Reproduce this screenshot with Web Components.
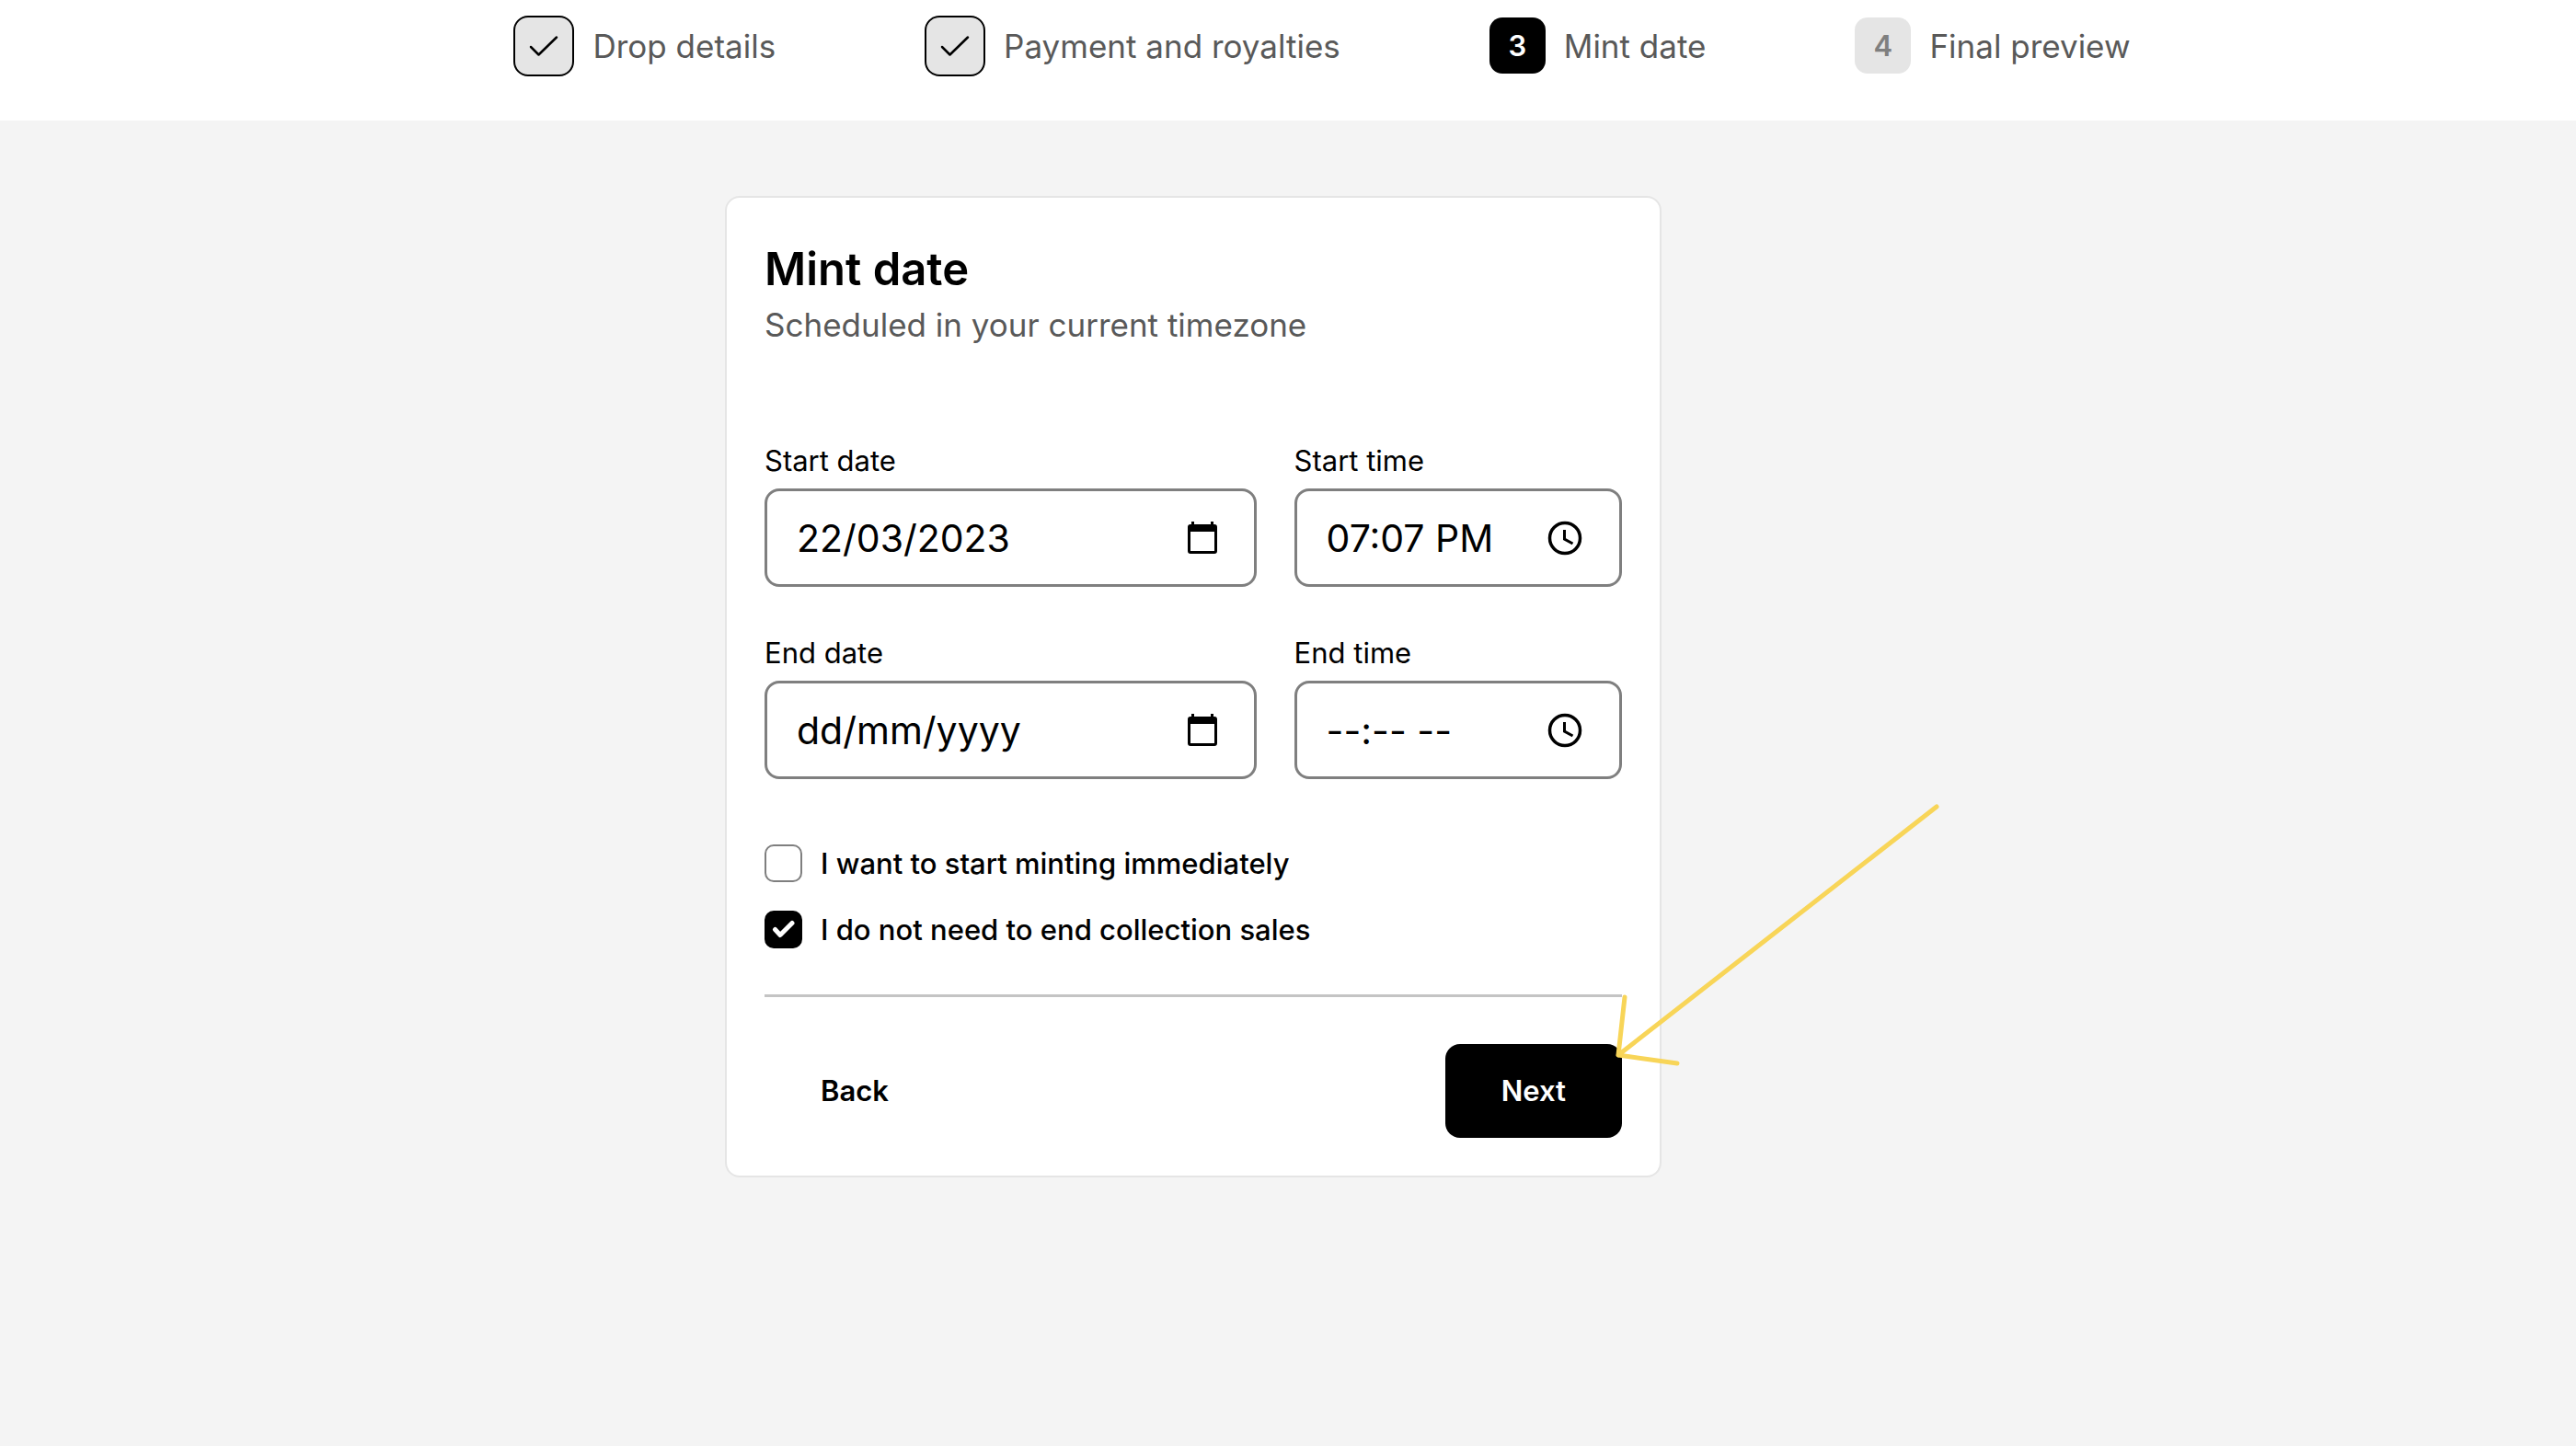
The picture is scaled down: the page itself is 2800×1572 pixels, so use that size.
<!DOCTYPE html>
<html lang="en">
<head>
<meta charset="utf-8">
<title>Mint date</title>
<style>
  body { margin: 0; min-height: 100vh; background: #f4f4f4; color: #000; font-family: Inter, "Liberation Sans", sans-serif; }
</style>
</head>
<body>
<mint-page></mint-page>
<script>
const define = (name, html, setup) => {
  const template = document.createElement('template');
  template.innerHTML = html;
  customElements.define(name, class extends HTMLElement {
    connectedCallback() {
      if (this.shadowRoot) return;
      const root = this.attachShadow({ mode: 'open' });
      root.append(template.content.cloneNode(true));
      if (setup) setup(this, root);
    }
  });
};

define('step-item', `
<style>
  :host { display: flex; align-items: center; gap: 20px; color: #595959; font-size: 35px; line-height: 44px; white-space: nowrap; }
  .badge { box-sizing: border-box; display: flex; align-items: center; justify-content: center; width: 61px; height: 61px; border-radius: 14px; background: #e5e5e5; color: #7f7f7f; font-size: 31px; font-weight: 600; }
  svg { display: none; width: 34px; height: 26px; }
  :host([state="done"]) .badge { width: 66px; height: 66px; border: 2px solid #000; border-radius: 16px; }
  :host([state="done"]) svg { display: block; }
  :host([state="current"]) .badge { background: #000; color: #fff; }
</style>
<span class="badge"><svg viewBox="0 0 34 26" fill="none" stroke="#000" stroke-width="2.500" stroke-linecap="round" stroke-linejoin="round" aria-hidden="true"><path d="M3 14 L11.500 22.500 L31 3.500"/></svg></span>
<span><slot></slot></span>`, (host, root) => {
  if (host.getAttribute('number')) root.querySelector('.badge').textContent = host.getAttribute('number');
});

define('step-bar', `
<style>
  :host { display: flex; box-sizing: border-box; justify-content: center; align-items: center; gap: 162px; height: 131px; padding: 0 0 32px 74px; background: #fff; }
</style>
<slot></slot>`);

define('form-card', `
<style>
  :host { display: block; box-sizing: border-box; width: 100%; max-width: 1018px; padding: 41px; border: 2px solid #e5e5e5; border-radius: 16px; background: #fff; }
  h1 { margin: 7px 0 0; font-size: 49px; line-height: 60px; font-weight: 600; }
  p { margin: 0; color: #595959; font-size: 35px; line-height: 60px; }
</style>
<header><h1><slot name="title"></slot></h1><p><slot name="subtitle"></slot></p></header>
<slot></slot>`);

define('date-field', `
<style>
  :host { display: block; min-width: 0; }
  label { display: block; margin-bottom: 10px; font-size: 31px; line-height: 40px; }
  .box { box-sizing: border-box; display: flex; align-items: center; height: 107px; padding: 0 36px 0 32px; border: 3px solid #7f7f7f; border-radius: 16px; background: #fff; }
  input { flex: 1; min-width: 0; padding: 0; border: 0; outline: 0; background: none; color: #000; font: 41px/48px Inter, "Liberation Sans", sans-serif; }
  input::placeholder { color: #000; opacity: 1; }
  button { display: flex; padding: 0; border: 0; background: none; }
  svg { width: 42px; height: 42px; }
  .clock, :host([kind="time"]) .calendar { display: none; }
  :host([kind="time"]) .clock { display: block; }
</style>
<label for="field"></label>
<div class="box">
  <input id="field" type="text">
  <button type="button">
    <svg class="calendar" viewBox="0 0 42 42" aria-hidden="true"><path fill="#000" fill-rule="evenodd" d="M10 3h3v3h18V3h3v3h1q3 0 3 3v26q0 3-3 3H9q-3 0-3-3V9q0-3 3-3h1zM9 14v21h26V14z"/></svg>
    <svg class="clock" viewBox="0 0 42 42" fill="none" stroke="#000" aria-hidden="true"><circle cx="19" cy="21" r="16.500" stroke-width="3.500"/><path stroke-width="3" d="M18.500 12v10l9 5"/></svg>
  </button>
</div>`, (host, root) => {
  const input = root.querySelector('input');
  root.querySelector('label').textContent = host.getAttribute('label');
  input.value = host.getAttribute('value') || '';
  input.placeholder = host.getAttribute('placeholder') || '';
  root.querySelector('button').setAttribute('aria-label', 'Choose ' + host.getAttribute('label').toLowerCase());
});

define('check-row', `
<style>
  :host { display: block; }
  label { display: flex; align-items: center; gap: 20px; font-size: 31px; line-height: 41px; font-weight: 500; }
  .control { display: grid; flex: none; }
  .control > * { grid-area: 1 / 1; }
  input { appearance: none; box-sizing: border-box; width: 41px; height: 41px; margin: 0; border: 2px solid #7f7f7f; border-radius: 10px; background: #fff; }
  input:checked { border-color: #000; background: #000; }
  svg { width: 41px; height: 41px; pointer-events: none; visibility: hidden; }
  input:checked + svg { visibility: visible; }
</style>
<label><span class="control"><input type="checkbox"><svg viewBox="0 0 41 41" fill="none" stroke="#fff" stroke-width="5" stroke-linecap="round" stroke-linejoin="round" aria-hidden="true"><path d="M11.500 20.500 L17 26.500 L30 13.500"/></svg></span><span><slot></slot></span></label>`, (host, root) => {
  root.querySelector('input').checked = host.hasAttribute('checked');
});

define('action-button', `
<style>
  :host { display: block; }
  button { height: 102px; padding: 0 61px; border: 0; border-radius: 16px; background: none; color: #000; font: 600 31px/40px Inter, "Liberation Sans", sans-serif; }
  :host([primary]) button { background: #000; color: #fff; }
</style>
<button type="button"><slot></slot></button>`);

define('pointer-arrow', `
<style>
  :host { display: block; position: relative; }
  svg { position: absolute; right: -346px; top: -261px; width: 356px; height: 286px; pointer-events: none; }
</style>
<slot></slot>
<svg viewBox="0 0 356 286" fill="none" stroke="#f8d558" stroke-width="5" stroke-linecap="round" stroke-linejoin="round" aria-hidden="true"><path d="M352 3 L6 273 M13 210 L6 273 L70 282"/></svg>`);

define('mint-page', `
<style>
  :host { display: block; }
  main { display: flex; justify-content: center; padding: 82px 206px 82px 0; }
  .fields { display: grid; grid-template-columns: 3fr 2fr; gap: 52px 41px; margin-top: 98px; }
  .checks { display: grid; gap: 31px; margin-top: 71px; }
  hr { margin: 50px 0 51px; border: 0; border-top: 3px solid #c4c4c4; }
  .actions { display: flex; justify-content: space-between; }
</style>
<step-bar>
  <step-item state="done">Drop details</step-item>
  <step-item state="done">Payment and royalties</step-item>
  <step-item state="current" number="3">Mint date</step-item>
  <step-item number="4">Final preview</step-item>
</step-bar>
<main>
  <form-card>
    <span slot="title">Mint date</span>
    <span slot="subtitle">Scheduled in your current timezone</span>
    <div class="fields">
      <date-field label="Start date" value="22/03/2023"></date-field>
      <date-field kind="time" label="Start time" value="07:07 PM"></date-field>
      <date-field label="End date" placeholder="dd/mm/yyyy"></date-field>
      <date-field kind="time" label="End time" placeholder="--:-- --"></date-field>
    </div>
    <div class="checks">
      <check-row>I want to start minting immediately</check-row>
      <check-row checked>I do not need to end collection sales</check-row>
    </div>
    <hr>
    <div class="actions">
      <action-button>Back</action-button>
      <pointer-arrow><action-button primary>Next</action-button></pointer-arrow>
    </div>
  </form-card>
</main>`);
</script>
</body>
</html>
